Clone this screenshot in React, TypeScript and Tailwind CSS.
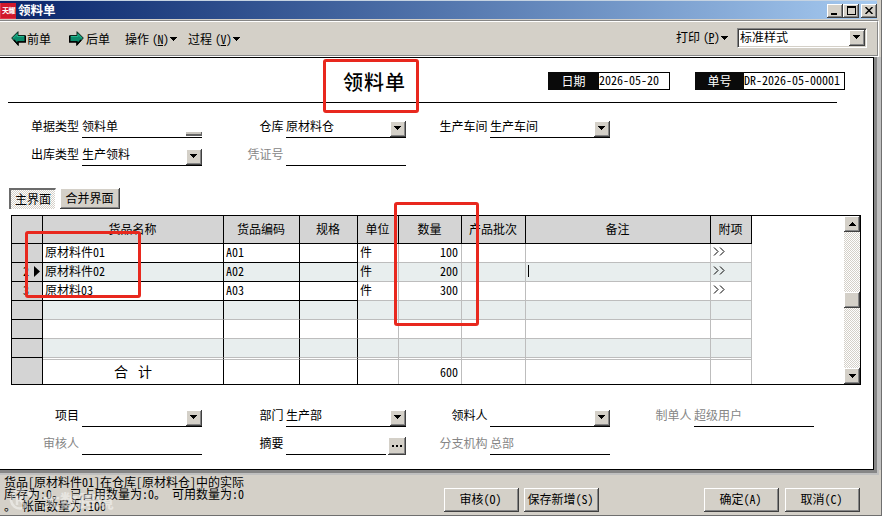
import React from 'react';
import clsx from 'clsx';

const raised =
  'bg-[#d4d0c8] shadow-[inset_-1px_-1px_#404040,inset_1px_1px_#ffffff,inset_-2px_-2px_#868686]';

const dither =
  'bg-[repeating-conic-gradient(#ffffff_0_25%,#d4d0c8_0_50%)] bg-[length:2px_2px]';

function Triangle({ up = false }: { up?: boolean }) {
  return (
    <svg width="7" height="4" viewBox="0 0 7 4" shapeRendering="crispEdges" className={clsx('shrink-0', up && 'rotate-180')}>
      <path d="M0 0h7v1H0zM1 1h5v1H1zM2 2h3v1H2zM3 3h1v1H3z" />
    </svg>
  );
}

function ArrowIcon({ flip = false }: { flip?: boolean }) {
  return (
    <svg width="15" height="15" viewBox="0 0 15 15" className={clsx('shrink-0', flip && '-scale-x-100')}>
      <path d="M0.7 7 L7 0.7 V4.5 H14.3 V10.5 H7 V14.2 Z" fill="#0b8a6a" stroke="#10241c" strokeWidth="1" />
      <path d="M2.4 7 L6 3.4 V5.5 H13" fill="none" stroke="#23b58c" strokeWidth="1" />
      <path d="M3 9L7 13.4V11H14.3V5" fill="none" stroke="#000" strokeWidth="1.4" />
    </svg>
  );
}

function DropButton() {
  return (
    <span className={clsx('w-4 h-4 shrink-0 flex items-center justify-center pb-0.5 pr-px', raised)}>
      <Triangle />
    </span>
  );
}

function MenuItem({ text, hotkey, className }: { text: string; hotkey: string; className?: string }) {
  return (
    <div className={clsx('flex items-center', className)}>
      <span className="w-6">{text}</span>
      <span className="ml-[3px] w-4 tracking-[-0.5px] whitespace-nowrap">
        (<u className="underline-offset-1">{hotkey}</u>)
      </span>
      <span className="ml-0.5 mt-px">
        <Triangle />
      </span>
    </div>
  );
}

type FieldProps = {
  label: string;
  value?: string;
  kind?: 'drop' | 'stub' | 'dots';
  muted?: boolean;
  mutedValue?: boolean;
  first?: boolean;
};

function Field({ label, value = '', kind, muted, mutedValue, first }: FieldProps) {
  return (
    <div className="flex h-7 gap-0.5">
      <div className={clsx('pt-[5px] pb-px flex items-center justify-end', first ? 'w-20 pr-px' : 'w-[82px] pr-[0.5px]', muted && 'text-[#868686]')}>
        {label}
      </div>
      <div className={clsx('h-7 border-b border-black flex justify-between', kind === 'dots' ? 'w-[100px]' : 'w-[120px]')}>
        <span className={clsx('pt-[5px] flex items-center', mutedValue && 'text-[#868686]')}>{value}</span>
        {kind === 'drop' && (
          <span className="self-end">
            <DropButton />
          </span>
        )}
        {kind === 'stub' && <span className="self-end w-4 h-1 mb-px bg-[#c8c5be] border-b-2 border-r border-[#666666]" />}
      </div>
      {kind === 'dots' && (
        <span className={clsx('self-end w-[18px] h-[18px] flex items-center justify-center gap-0.5', raised)}>
          <i className="w-0.5 h-0.5 bg-black" />
          <i className="w-0.5 h-0.5 bg-black" />
          <i className="w-0.5 h-0.5 bg-black" />
        </span>
      )}
    </div>
  );
}

function Tag({ label, value, className }: { label: string; value: string; className: string }) {
  return (
    <div className={clsx('mt-3.5 h-[18px] flex text-[12px]', className)}>
      <div className="bg-[#0a0a0a] text-white grow flex items-center justify-center">{label}</div>
      <div className={clsx('border border-l-0 border-black bg-white flex items-center pb-0.5 whitespace-nowrap', value.length > 10 ? 'w-[101px]' : 'w-[71px]')}>{value}</div>
    </div>
  );
}

const columns = [
  { title: '', width: 'w-[31px]' },
  { title: '货品名称', width: 'w-[181px]' },
  { title: '货品编码', width: 'w-[76px]' },
  { title: '规格', width: 'w-[58px]' },
  { title: '单位', width: 'w-[41px]' },
  { title: '数量', width: 'w-[63px]' },
  { title: '产品批次', width: 'w-[64px]' },
  { title: '备注', width: 'w-[185px]' },
  { title: '附项', width: 'w-[41px]' },
];

const rows = [
  ['', '原材料件01', 'A01', '', '件', '100', '', '', '>>'],
  ['2', '原材料件02', 'A02', '', '件', '200', '', '|', '>>'],
  ['3', '原材料03', 'A03', '', '件', '300', '', '', '>>'],
  [],
  [],
  [],
];

function Cell({ row, col }: { row: number; col: number }) {
  const text = rows[row][col] || '';
  const black = col === 0 || (row < 3 && col < 4);
  return (
    <div
      className={clsx(
        'h-[19px] border-r border-b flex items-center shrink-0 pb-0.5',
        columns[col].width,
        col < 4 ? 'border-r-black' : 'border-r-[#bdbdbd]',
        black ? 'border-b-black' : 'border-b-[#bdbdbd]',
        col === 0 ? 'bg-[#d4d4d4] pl-[11px]' : row % 2 ? 'bg-[#e8eeee]' : 'bg-white',
        col > 0 && col !== 5 && 'pl-0.5',
        col === 5 && 'justify-end pr-[3px]'
      )}
    >
      {text === '|' ? (
        <i className="w-px h-3 bg-black" />
      ) : text === '>>' ? (
        <svg width="13" height="9" viewBox="0 0 13 9" className="mb-px" fill="none" stroke="#000" strokeWidth="1">
          <path d="M1 0.5L5 4.5L1 8.5M7 0.5L11 4.5L7 8.5" />
        </svg>
      ) : (
        <span>{text}</span>
      )}
      {row === 1 && col === 0 && (
        <svg width="6" height="11" viewBox="0 0 6 11" className="ml-[5px] mt-px">
          <path d="M0 0L6 5.5L0 11Z" />
        </svg>
      )}
    </div>
  );
}

function ItemGrid() {
  return (
    <div className="w-[850px] h-[170px] border border-black flex">
      <div className="w-[740px]">
        <div className="flex">
          {columns.map((c, i) => (
            <div
              key={i}
              className={clsx('h-7 bg-[#d4d4d4] border-r border-b border-black flex items-center justify-center shrink-0 whitespace-nowrap pb-0.5 pr-px', c.width)}
            >
              {c.title}
            </div>
          ))}
        </div>
        {rows.map((_, r) => (
          <div key={r} className="flex">
            {columns.map((_, c) => (
              <Cell key={c} row={r} col={c} />
            ))}
          </div>
        ))}
        <div className="flex">
          {columns.map((c, i) => (
            <div
              key={i}
              className={clsx('h-0.5 border-r shrink-0', c.width, i < 4 ? 'border-r-black' : 'border-r-[#bdbdbd]', i === 0 ? 'bg-[#d4d4d4]' : 'border-b border-b-[#bdbdbd]')}
            />
          ))}
        </div>
        <div className="flex">
          {columns.map((c, i) => (
            <div
              key={i}
              className={clsx(
                'h-6 border-r shrink-0 flex items-center',
                c.width,
                i < 4 ? 'border-r-black' : 'border-r-[#bdbdbd]',
                i === 0 && 'bg-[#d4d4d4]',
                i === 5 && 'justify-end pr-[3px]'
              )}
            >
              {i === 1 && <span className="w-full pb-0.5 flex justify-center gap-2.5 text-[14px]"><span>合</span><span>计</span></span>}
              {i === 5 && <span>600</span>}
            </div>
          ))}
        </div>
      </div>
      <div className="flex-1" />
      <div className={clsx('w-4 flex flex-col', dither)}>
        <span className={clsx('h-4 flex items-center justify-center', raised)}>
          <Triangle up />
        </span>
        <span className={clsx('h-4 mt-[60px]', raised)} />
        <span className={clsx('h-4 mt-auto flex items-center justify-center', raised)}>
          <Triangle />
        </span>
      </div>
    </div>
  );
}

function ActionButton({ children, className }: { children: string; className?: string }) {
  return (
    <button className={clsx('w-[75px] h-6 flex items-center justify-center whitespace-nowrap pb-0.5 pr-0.5', raised, className)}>
      {children}
    </button>
  );
}

export default function App() {
  return (
    <main className="relative w-[882px] h-[516px] overflow-hidden bg-[#d4d0c8] border-r border-b border-[#6f6f6f] flex flex-col text-[12px] leading-3 text-black font-['Noto_Sans_CJK_SC',sans-serif] [font-feature-settings:'hwid']">
      {/* Title bar */}
      <header className="w-[877px] h-5 border-t border-[#c5d3e2] pb-px">
        <div className="h-[18px] flex items-center bg-linear-to-r from-[#0a246a] to-[#a6caf0]">
          <div className="w-4 h-4 mt-0.5 bg-[#d0182b] text-white text-[7px] leading-[7px] font-bold flex items-center justify-center border-b border-l border-[#e0354a] whitespace-nowrap tracking-[-0.5px]">
            天耀
          </div>
          <span className="ml-0.5 text-white font-bold text-[12.5px]">领料单</span>
          <div className="ml-auto mt-px flex">
            <span className={clsx('w-4 h-3.5 flex items-end pl-1 pb-[3px]', raised)}>
              <i className="w-1.5 h-0.5 bg-black" />
            </span>
            <span className={clsx('w-4 h-3.5 flex items-center justify-center pb-px', raised)}>
              <i className="w-[9px] h-[9px] border border-t-2 border-black" />
            </span>
            <span className={clsx('w-4 h-3.5 ml-0.5 flex items-center justify-center', raised)}>
              <svg width="8" height="7" viewBox="0 0 8 7" stroke="#000" strokeWidth="1.5">
                <path d="M0.5 0L7.5 7M7.5 0L0.5 7" />
              </svg>
            </span>
          </div>
        </div>
      </header>

      {/* Toolbar */}
      <nav className="w-[879px] h-[37px] shrink-0 border-t border-t-[#868686] border-b border-b-white border-r border-r-white">
        <div className="h-[35px] border-t border-t-white border-b border-b-[#868686] border-r border-r-[#868686] flex items-center pl-[11px]">
          <ArrowIcon />
          <span className="ml-px w-6">前单</span>
          <span className="ml-[18px]">
            <ArrowIcon flip />
          </span>
          <span className="ml-0.5 w-6">后单</span>
          <MenuItem className="ml-[15px]" text="操作" hotkey="N" />
          <MenuItem className="ml-[11px]" text="过程" hotkey="V" />
          <MenuItem className="ml-auto mb-[3px]" text="打印" hotkey="P" />
          <div className="ml-[9px] mr-[10px] mb-px w-[130px] h-5 bg-white border border-t-[#868686] border-l-[#868686] border-r-white border-b-white shadow-[inset_1px_1px_#404040,inset_-1px_-1px_#d4d0c8] flex items-center justify-between pl-0.5 pr-px">
            <span className="pb-0.5">标准样式</span>
            <DropButton />
          </div>
        </div>
      </nav>

      {/* Document */}
      <div className="w-[881px] h-[418px] shrink-0 flex">
        <section className="w-[874px] h-[413px] box-border bg-white border-t border-r border-b border-black shadow-[3px_0_#868686,0_3px_#868686,3px_3px_#868686,7px_0_#c0c0c0,0_5px_#c0c0c0,5px_5px_#c0c0c0]">
          <div className="h-11 flex pl-[343px]">
            <h1 className="w-[205px] pt-2 flex items-center pb-1 text-[20px] tracking-[1px] font-medium">领料单</h1>
            <Tag className="w-[122px]" label="日期" value="2026-05-20" />
            <Tag className="ml-[25px] w-[150px]" label="单号" value="DR-2026-05-00001" />
          </div>
          <div className="ml-2 w-[829px] h-px bg-black" />

          <div className="mt-[7px] flex">
            <Field first label="单据类型" value="领料单" kind="stub" />
            <Field label="仓库" value="原材料仓" kind="drop" />
            <Field label="生产车间" value="生产车间" kind="drop" />
          </div>
          <div className="flex">
            <Field first label="出库类型" value="生产领料" kind="drop" />
            <Field label="凭证号" muted />
          </div>

          <div className="mt-[22px] ml-[9px] h-[21px] flex gap-1">
            <span className={clsx('w-[47px] flex items-center justify-center pb-px border-t-2 border-l-2 border-[#6b6b6b] border-r border-r-white', dither)}>
              主界面
            </span>
            <span className={clsx('w-[60px] flex items-center justify-center pb-0.5 pr-px', raised)}>合并界面</span>
          </div>

          <div className="mt-1.5 ml-[11px]">
            <ItemGrid />
          </div>

          <div className="mt-3.5 flex">
            <Field first label="项目" kind="drop" />
            <Field label="部门" value="生产部" kind="drop" />
            <Field label="领料人" kind="drop" />
            <Field label="制单人" value="超级用户" muted mutedValue />
          </div>
          <div className="flex">
            <Field first label="审核人" muted />
            <Field label="摘要" kind="dots" />
            <Field label="分支机构" value="总部" muted mutedValue />
          </div>
        </section>
      </div>

      {/* Status line and actions */}
      <footer className="h-10 flex">
        <div className="w-[444px] pl-1 pt-px whitespace-pre">
          <div className="h-3">货品[原材料件01]在仓库[原材料仓]中的实际</div>
          <div className="h-3">库存为:0。 已占用数量为:0。 可用数量为:0</div>
          <div className="h-3">。 帐面数量为:100</div>
        </div>
        <div className="pt-[13px] flex">
          <ActionButton>审核(O)</ActionButton>
          <ActionButton className="ml-[5px]">保存新增(S)</ActionButton>
          <ActionButton className="ml-[105px]">确定(A)</ActionButton>
          <ActionButton className="ml-1.5">取消(C)</ActionButton>
        </div>
      </footer>

      {/* Watermark over the status text */}
      <div className="absolute left-2 top-[489px] flex items-center gap-1.5 opacity-45 text-white">
        <svg width="28" height="22" viewBox="0 0 28 22" fill="none" stroke="#fff" strokeWidth="2.5">
          <path d="M17 3A9 9 0 1 0 19 16M9 7V16M9 12L16 7M12 11L18 17" />
          <circle cx="22" cy="5" r="1.5" />
        </svg>
        <span className="text-[18px] leading-[22px] font-bold">大数跨境</span>
      </div>

      {/* Highlight frames */}
      <div className="absolute left-[323px] top-[59px] w-24 h-[54px] rounded-[3px] border-3 border-[#e8281e]" />
      <div className="absolute left-[25px] top-[231px] w-[116px] h-[67px] rounded-[3px] border-3 border-[#e8281e]" />
      <div className="absolute left-[394px] top-[202px] w-[85px] h-[124px] rounded-[3px] border-3 border-[#e8281e]" />
    </main>
  );
}
